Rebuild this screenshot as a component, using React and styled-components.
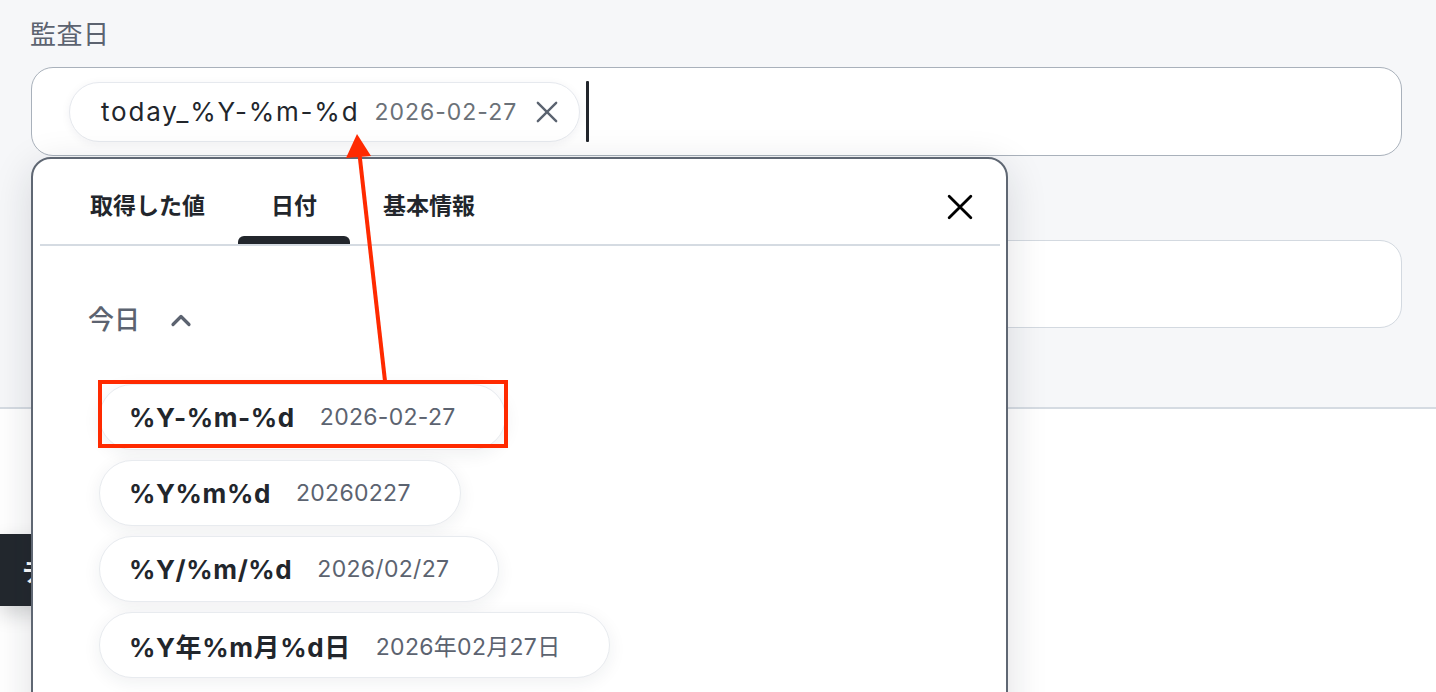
import React from 'react';
import styled, { createGlobalStyle } from 'styled-components';

const GlobalStyle = createGlobalStyle`
  html, body {
    margin: 0;
    padding: 0;
    background: #ffffff;
  }
  body {
    font-family: Inter, 'Noto Sans CJK JP', sans-serif;
    color: #22262c;
  }
  * {
    box-sizing: border-box;
  }
`;

const Page = styled.div`
  position: relative;
  height: 692px;
  overflow: hidden;
`;

const FormSection = styled.section`
  background: #f6f7f9;
  padding: 17px 34px 79px 31px;
  border-bottom: 2px solid #d5dbe2;
  display: flex;
  flex-direction: column;
`;

const Field = styled.div`
  display: flex;
  flex-direction: column;
  gap: 14px;
`;

const FieldLabel = styled.label`
  font-size: 26px;
  line-height: 36px;
  letter-spacing: 0.5px;
  color: #5c6370;
  margin-left: -1px;
`;

const TokenInput = styled.div`
  height: ${({ $height }) => $height}px;
  margin-top: ${({ $offset = 0 }) => $offset}px;
  background: #ffffff;
  border: 1.5px solid ${({ $focused }) => ($focused ? '#a9b1bb' : '#d3d9e0')};
  border-radius: 22px;
  display: flex;
  align-items: center;
  gap: 6px;
  padding: 0 37px;
`;

const Chip = styled.div`
  height: 60px;
  display: flex;
  align-items: center;
  padding: 0 20px 0 31px;
  background: #ffffff;
  border: 1px solid #e6e9ee;
  border-radius: 30px;
  box-shadow: 0 2px 10px rgba(30, 40, 60, 0.06);
`;

const ChipLabel = styled.span`
  font-size: 26px;
  letter-spacing: 1.8px;
  color: #22262c;
`;

const ChipValue = styled.span`
  font-size: 23px;
  letter-spacing: 1px;
  color: #6b7178;
  margin-left: 15px;
`;

const IconButton = styled.button`
  border: 0;
  background: none;
  padding: 0;
  display: flex;
  align-items: center;
  justify-content: center;
  cursor: pointer;
  color: ${({ $color }) => $color};
`;

const ChipRemove = styled(IconButton)`
  margin-left: 18px;
  width: 24px;
  height: 24px;
`;

const Caret = styled.span`
  width: 3px;
  height: 61px;
  background: #22262c;
  border-radius: 1px;
`;

const LowerSection = styled.section`
  padding-top: 125px;
`;

const DarkButton = styled.button`
  height: 72px;
  border: 0;
  border-radius: 0 6px 6px 0;
  background: #23282e;
  color: #ffffff;
  font-family: inherit;
  font-size: 24px;
  font-weight: 700;
  padding: 0 28px 0 22px;
  box-shadow: 0 8px 20px rgba(20, 25, 35, 0.18);
`;

const Popover = styled.div`
  position: absolute;
  top: 157px;
  left: 31px;
  width: 977px;
  height: 620px;
  background: #ffffff;
  border: 2px solid #5f6773;
  border-radius: 20px;
  box-shadow: 0 10px 40px rgba(20, 30, 45, 0.14);
`;

const TabBar = styled.div`
  display: flex;
  align-items: flex-start;
  height: 87px;
  margin: 0 6px 0 7px;
  padding: 0 26px 0 17px;
  border-bottom: 2px solid #d5dbe2;
`;

const Tab = styled.button`
  position: relative;
  height: 85px;
  padding: 4px 33px 0;
  border: 0;
  background: none;
  font-family: inherit;
  font-size: 23px;
  font-weight: 700;
  color: #22262c;
  cursor: pointer;

  &::after {
    content: '';
    display: ${({ $active }) => ($active ? 'block' : 'none')};
    position: absolute;
    left: 0;
    right: 0;
    bottom: 0;
    height: 8px;
    border-radius: 6px 6px 0 0;
    background: #22262c;
  }
`;

const CloseButton = styled(IconButton)`
  margin-left: auto;
  margin-top: 34px;
  width: 28px;
  height: 28px;
`;

const GroupHeader = styled.button`
  display: flex;
  align-items: center;
  gap: 30px;
  margin: 56px 0 0 55px;
  padding: 0;
  border: 0;
  background: none;
  font-family: inherit;
  font-size: 26px;
  line-height: 36px;
  font-weight: 500;
  color: #5c6370;
`;

const OptionList = styled.div`
  display: flex;
  flex-direction: column;
  align-items: flex-start;
  gap: 10px;
  margin: 46px 0 0 66px;
`;

const OptionPill = styled.button`
  height: 66px;
  display: flex;
  align-items: center;
  gap: 25px;
  padding: 0 49px 0 29px;
  background: #ffffff;
  border: 1px solid #e8ebef;
  border-radius: 33px;
  box-shadow: 0 4px 18px rgba(30, 40, 60, 0.07);
  font-family: inherit;
  cursor: pointer;
`;

const OptionName = styled.span`
  font-size: 26px;
  font-weight: 700;
  letter-spacing: 0.6px;
  color: #22262c;
`;

const OptionValue = styled.span`
  font-size: 23px;
  letter-spacing: 0.3px;
  color: #5c6370;
`;

const Highlight = styled.div`
  position: absolute;
  left: 98px;
  top: 380px;
  width: 410px;
  height: 68px;
  border: 4px solid #ff2a00;
  pointer-events: none;
`;

const ArrowLayer = styled.svg`
  position: absolute;
  left: 0;
  top: 0;
  pointer-events: none;
`;

const CrossIcon = ({ size, stroke }) => (
  <svg width={size} height={size} viewBox="0 0 24 24" fill="none">
    <path d="M2 2 22 22M22 2 2 22" stroke="currentColor" strokeWidth={stroke} strokeLinecap="round" />
  </svg>
);

const ChevronUp = () => (
  <svg width="22" height="14" viewBox="0 0 22 14" fill="none">
    <path d="M3 11.5 11 3.5l8 8" stroke="currentColor" strokeWidth="3.2" strokeLinecap="round" strokeLinejoin="round" />
  </svg>
);

const tabs = [
  { label: '取得した値' },
  { label: '日付', active: true },
  { label: '基本情報' },
];

const formats = [
  { name: '%Y-%m-%d', value: '2026-02-27' },
  { name: '%Y%m%d', value: '20260227' },
  { name: '%Y/%m/%d', value: '2026/02/27' },
  { name: '%Y年%m月%d日', value: '2026年02月27日' },
];

const App = () => (
  <>
    <GlobalStyle />
    <Page>
      <FormSection>
        <Field>
          <FieldLabel>監査日</FieldLabel>
          <TokenInput $height={89} $focused>
            <Chip>
              <ChipLabel>today_%Y-%m-%d</ChipLabel>
              <ChipValue>2026-02-27</ChipValue>
              <ChipRemove $color="#5b6370" aria-label="削除">
                <CrossIcon size={22} stroke={2.6} />
              </ChipRemove>
            </Chip>
            <Caret />
          </TokenInput>
        </Field>
        <TokenInput $height={88} $offset={84} />
      </FormSection>

      <LowerSection>
        <DarkButton>テスト</DarkButton>
      </LowerSection>

      <Popover>
        <TabBar>
          {tabs.map(tab => (
            <Tab key={tab.label} $active={tab.active}>
              {tab.label}
            </Tab>
          ))}
          <CloseButton $color="#000000" aria-label="閉じる">
            <CrossIcon size={26} stroke={2.6} />
          </CloseButton>
        </TabBar>

        <GroupHeader>
          今日
          <ChevronUp />
        </GroupHeader>

        <OptionList>
          {formats.map(f => (
            <OptionPill key={f.name}>
              <OptionName>{f.name}</OptionName>
              <OptionValue>{f.value}</OptionValue>
            </OptionPill>
          ))}
        </OptionList>
      </Popover>

      <Highlight />
      <ArrowLayer width="1436" height="692">
        <line x1="385" y1="381" x2="359" y2="150" stroke="#ff2a00" strokeWidth="4" />
        <polygon points="357,134 346,158 371,156" fill="#ff2a00" />
      </ArrowLayer>
    </Page>
  </>
);

export default App;
